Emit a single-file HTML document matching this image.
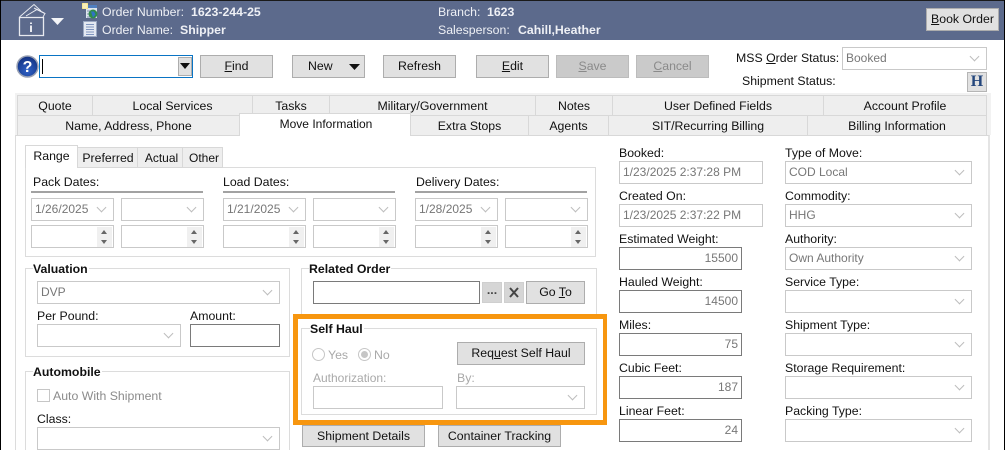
<!DOCTYPE html>
<html><head><meta charset="utf-8"><style>
html,body{margin:0;padding:0;background:#fff}
#p{position:relative;width:1005px;height:450px;overflow:hidden;background:#fff;font:12.3px/14px "Liberation Sans",sans-serif;color:#111}
#p div,#p span.t{position:absolute;box-sizing:border-box;white-space:nowrap}
.t{line-height:14px}
.w{color:#eef0f5}.b{font-weight:bold}
#p .btn{background:#e1e1e1;border:1px solid #adadad;text-align:center;line-height:20px;color:#111}
#p .dis{background:#cacaca;border-color:#bcbcbc;color:#8a8a8a}
#p .sel,#p .inp{background:#fff;border:1px solid #c9c9c9;height:23px;line-height:21px;padding-left:3px;color:#777;font-size:12px}
#p .dk{border-color:#7a7a7a;text-align:right;padding-right:3px;padding-left:0}
#p .sel:after{content:"";position:absolute;right:8px;top:5px;width:6px;height:6px;border-right:1px solid #bdbdbd;border-bottom:1px solid #bdbdbd;transform:rotate(45deg)}
#p .tab{background:#eee;border:1px solid #d8d8d8;border-left:0;text-align:center;line-height:21px;height:21px;color:#111}
#p .fs{border:1px solid #dcdcdc;background:#fff}
#p .ln{background:#a2a2a2;height:2px}
#p .sp{background:#f0f0f0;width:15px;height:10px}
#p .sp:after{content:"";position:absolute;left:4px;border-left:3.5px solid transparent;border-right:3.5px solid transparent}
#p .u:after{top:3px;border-bottom:4px solid #666}
#p .d:after{top:3px;border-top:4px solid #666}
#p .rad{width:13px;height:13px;border:1px solid #c6c6c6;border-radius:50%;background:#fff}
.lg{background:#fff;padding-right:1px}
.g{color:#a9a9a9}
#p span.l{margin-top:1px}
</style></head><body><div id="p">

<div style="left:0;top:0;width:1005px;height:40px;background:#5c6a8c;border-top:1px solid #1a1a1a"></div>
<div style="left:0;top:0;width:1px;height:450px;background:#000"></div>
<div style="left:1004px;top:0;width:1px;height:450px;background:#000"></div>

<svg style="position:absolute;left:17px;top:2px" width="32" height="36" viewBox="0 0 32 36" fill="none" stroke="#e8eaf0" stroke-width="1"><path d="M2.500 15 L17 2.500 L24 9"/><path d="M2.500 15.500H26.500V33.500H2.500Z" stroke-width="1.300"/><path d="M9 14 L20 7.500 L28 11.500 L26 15"/><path d="M17 6 L27 11"/><path d="M14 23.500v6.500M14 20.500v1.500" stroke-width="2"/></svg>
<svg style="position:absolute;left:51px;top:18px" width="13" height="8"><path d="M0 0H13L6.500 7Z" fill="#f4f5f8"/></svg>

<svg style="position:absolute;left:81px;top:2px" width="18" height="18"><rect x="5" y="3" width="11" height="13" fill="#dfe6ee"/><rect x="6" y="3" width="10" height="3" fill="#4f7fc0"/><path d="M6 9H10M6 12H10M6 15H10" stroke="#7d8db0"/><rect x="1" y="1" width="6" height="6" fill="#f3e27a"/><path d="M1 3H7M1 5H7M3 1V7M5 1V7" stroke="#fff" stroke-width=".6"/><circle cx="12" cy="12" r="4.500" fill="#2f8a4c"/><path d="M10 9.500h3l1.500 3-2.500 3z" fill="#2f72c8"/></svg>
<svg style="position:absolute;left:83px;top:21px" width="15" height="16"><rect x=".5" y=".5" width="13" height="15" fill="#e4e9f2" stroke="#9aa8c2"/><path d="M3 3.500H11M3 6H11M3 8.500H11M3 11H11M3 13.500H11" stroke="#7f95bf"/></svg>

<span class="t w" style="left:102px;top:5px">Order Number:</span><span class="t w b" style="left:191px;top:5px">1623-244-25</span>
<span class="t w" style="left:102px;top:23px">Order Name:</span><span class="t w b" style="left:180px;top:23px">Shipper</span>
<span class="t w" style="left:438px;top:5px">Branch:</span><span class="t w b" style="left:487px;top:5px">1623</span>
<span class="t w" style="left:438px;top:23px">Salesperson:</span><span class="t w b" style="left:518px;top:23px">Cahill,Heather</span>
<div class="btn" style="left:926px;top:8px;width:73px;height:23px"><u>B</u>ook Order</div>

<svg style="position:absolute;left:16px;top:55px" width="23" height="23"><defs><radialGradient id="h" cx=".5" cy=".7" r=".7"><stop offset="0" stop-color="#2f62c8"/><stop offset="1" stop-color="#12307e"/></radialGradient></defs><circle cx="11.500" cy="11.500" r="10.500" fill="url(#h)" stroke="#9aa2b4" stroke-width="1.500"/><text x="11.500" y="17" text-anchor="middle" font-family="Liberation Sans" font-weight="bold" font-size="16" fill="#fff">?</text></svg>
<div style="left:39px;top:55px;width:154px;height:23px;border:1px solid #0a74c4;background:#fff"></div>
<div style="left:42px;top:59px;width:1px;height:15px;background:#000"></div>
<div style="left:178px;top:57px;width:14px;height:19px;background:#e1e1e1;border:1px solid #adadad"></div>
<svg style="position:absolute;left:180px;top:63px" width="10" height="6"><path d="M0 0H10L5 6Z" fill="#111"/></svg>
<div class="btn" style="left:200px;top:55px;width:73px;height:23px"><u>F</u>ind</div>
<div class="btn" style="left:292px;top:55px;width:73px;height:23px;text-align:left;padding-left:15px">New</div>
<svg style="position:absolute;left:349px;top:64px" width="11" height="6"><path d="M0 0H11L5.500 6Z" fill="#111"/></svg>
<div class="btn" style="left:383px;top:55px;width:73px;height:23px">Refresh</div>
<div class="btn" style="left:476px;top:55px;width:73px;height:23px"><u>E</u>dit</div>
<div class="btn dis" style="left:556px;top:55px;width:73px;height:23px"><u>S</u>ave</div>
<div class="btn dis" style="left:636px;top:55px;width:73px;height:23px"><u>C</u>ancel</div>
<span class="t" style="left:736px;top:51px">MSS <u>O</u>rder Status:</span>
<div class="sel" style="left:842px;top:47px;width:145px">Booked</div>
<span class="t" style="left:742px;top:74px">Shipment Status:</span>
<div style="left:967px;top:72px;width:20px;height:20px;background:#e1e1e1;border:1px solid #b5b5b5;text-align:center;font:bold 16px/18px 'Liberation Serif',serif;color:#24467c">H</div>

<div style="left:15px;top:93px;width:976px;height:42px;background:#f2f2f2"></div>
<div style="left:15px;top:135px;width:975px;height:320px;background:#fff;border-left:1px solid #dcdcdc;border-right:2px solid #e4e4e4;border-top:1px solid #d8d8d8"></div>

<div class="tab" style="left:17px;top:95px;width:76px;border-left:1px solid #d8d8d8">Quote</div>
<div class="tab" style="left:93px;top:95px;width:160px">Local Services</div>
<div class="tab" style="left:253px;top:95px;width:77px">Tasks</div>
<div class="tab" style="left:330px;top:95px;width:206px">Military/Government</div>
<div class="tab" style="left:536px;top:95px;width:77px">Notes</div>
<div class="tab" style="left:613px;top:95px;width:211px">User Defined Fields</div>
<div class="tab" style="left:824px;top:95px;width:163px">Account Profile</div>
<div class="tab" style="left:17px;top:115px;width:223px;border-left:1px solid #d8d8d8">Name, Address, Phone</div>
<div class="tab" style="left:411px;top:115px;width:118px">Extra Stops</div>
<div class="tab" style="left:529px;top:115px;width:80px">Agents</div>
<div class="tab" style="left:609px;top:115px;width:199px">SIT/Recurring Billing</div>
<div class="tab" style="left:808px;top:115px;width:179px">Billing Information</div>
<div class="tab" style="left:239px;top:113px;width:172px;height:23px;background:#fff;border-bottom:0;border-left:1px solid #d8d8d8;line-height:21px;font-size:12px;padding-left:2px">Move Information</div>

<div class="fs" style="left:25px;top:167px;width:571px;height:90px"></div>
<div class="tab" style="left:77px;top:147px;width:61px;padding-left:2px">Preferred</div>
<div class="tab" style="left:138px;top:147px;width:45px;padding-left:3px;font-size:12px">Actual</div>
<div class="tab" style="left:183px;top:147px;width:40px;padding-left:3px;font-size:12px">Other</div>
<div class="tab" style="left:25px;top:145px;width:53px;height:23px;background:#fff;border-bottom:0;border-left:1px solid #d8d8d8;line-height:20px">Range</div>

<span class="t l" style="left:33px;top:174px">Pack Dates:</span><div class="ln" style="left:31px;top:191px;width:172px"></div>
<span class="t l" style="left:223px;top:174px">Load Dates:</span><div class="ln" style="left:223px;top:191px;width:172px"></div>
<span class="t l" style="left:416px;top:174px">Delivery Dates:</span><div class="ln" style="left:415px;top:191px;width:172px"></div>

<div class="sel" style="left:31px;top:198px;width:83px">1/26/2025</div><div class="sel" style="left:121px;top:198px;width:83px"></div>
<div class="sel" style="left:223px;top:198px;width:83px">1/21/2025</div><div class="sel" style="left:313px;top:198px;width:83px"></div>
<div class="sel" style="left:415px;top:198px;width:83px">1/28/2025</div><div class="sel" style="left:505px;top:198px;width:83px"></div>

<div class="inp" style="left:31px;top:225px;width:83px"></div><div class="sp u" style="left:97px;top:227px"></div><div class="sp d" style="left:97px;top:237px"></div>
<div class="inp" style="left:121px;top:225px;width:83px"></div><div class="sp u" style="left:187px;top:227px"></div><div class="sp d" style="left:187px;top:237px"></div>
<div class="inp" style="left:223px;top:225px;width:83px"></div><div class="sp u" style="left:289px;top:227px"></div><div class="sp d" style="left:289px;top:237px"></div>
<div class="inp" style="left:313px;top:225px;width:83px"></div><div class="sp u" style="left:379px;top:227px"></div><div class="sp d" style="left:379px;top:237px"></div>
<div class="inp" style="left:415px;top:225px;width:83px"></div><div class="sp u" style="left:481px;top:227px"></div><div class="sp d" style="left:481px;top:237px"></div>
<div class="inp" style="left:505px;top:225px;width:83px"></div><div class="sp u" style="left:571px;top:227px"></div><div class="sp d" style="left:571px;top:237px"></div>

<div class="fs" style="left:25px;top:268px;width:265px;height:89px"></div>
<span class="t b lg" style="left:33px;top:262px">Valuation</span>
<div class="sel" style="left:37px;top:281px;width:243px">DVP</div>
<span class="t l" style="left:37px;top:308px">Per Pound:</span>
<span class="t l" style="left:190px;top:308px">Amount:</span>
<div class="sel" style="left:37px;top:324px;width:144px"></div>
<div class="inp dk" style="left:190px;top:324px;width:90px"></div>

<div class="fs" style="left:25px;top:371px;width:265px;height:90px"></div>
<span class="t b lg" style="left:33px;top:365px">Automobile</span>
<div style="left:37px;top:389px;width:13px;height:13px;border:1px solid #c6c6c6;background:#fff"></div>
<span class="t" style="left:53px;top:389px;color:#8b8b8b">Auto With Shipment</span>
<span class="t l" style="left:37px;top:411px">Class:</span>
<div class="sel" style="left:37px;top:427px;width:243px"></div>

<div class="fs" style="left:301px;top:268px;width:296px;height:60px"></div>
<span class="t b lg" style="left:309px;top:262px">Related Order</span>
<div class="inp" style="left:313px;top:281px;width:167px;border-color:#7a7a7a"></div>
<div class="btn" style="left:482px;top:282px;width:20px;height:21px;background:#d6d6d6;border-color:#cfcfcf;line-height:15px;font-weight:bold;color:#444">...</div>
<div class="btn" style="left:504px;top:282px;width:20px;height:21px;background:#d6d6d6;border-color:#cfcfcf"></div>
<svg style="position:absolute;left:509px;top:287px" width="10" height="11"><path d="M1 1L9 10M9 1L1 10" stroke="#444" stroke-width="2"/></svg>
<div class="btn" style="left:526px;top:281px;width:59px;height:23px">Go <u>T</u>o</div>

<div style="left:293px;top:314px;width:314px;height:111px;background:#fff;border:5px solid #f7960f;border-right-width:4px"></div>
<div class="fs" style="left:301px;top:328px;width:296px;height:87px"></div>
<span class="t b lg" style="left:310px;top:322px">Self Haul</span>
<div class="rad" style="left:312px;top:348px"></div><span class="t g" style="left:328px;top:348px">Yes</span>
<div class="rad" style="left:358px;top:348px"></div><div style="left:361px;top:351px;width:7px;height:7px;border-radius:50%;background:#c6c6c6"></div><span class="t g" style="left:374px;top:348px">No</span>
<div class="btn" style="left:457px;top:342px;width:128px;height:23px">Re<span>q</span><u>u</u>est Self Haul</div>
<span class="t g" style="left:313px;top:371px;font-size:12px">Authorization:</span>
<span class="t g" style="left:457px;top:371px">By:</span>
<div class="inp" style="left:313px;top:386px;width:130px"></div>
<div class="sel" style="left:456px;top:386px;width:129px"></div>

<div class="btn" style="left:302px;top:425px;width:123px;height:22px">Shipment Details</div>
<div class="btn" style="left:438px;top:425px;width:123px;height:22px">Container Tracking</div>

<span class="t l" style="left:619px;top:145px">Booked:</span><div class="inp" style="left:619px;top:161px;width:144px">1/23/2025 2:37:28 PM</div>
<span class="t l" style="left:619px;top:188px">Created On:</span><div class="inp" style="left:619px;top:204px;width:144px">1/23/2025 2:37:22 PM</div>
<span class="t l" style="left:619px;top:231px">Estimated Weight:</span><div class="inp dk" style="left:619px;top:247px;width:123px">15500</div>
<span class="t l" style="left:619px;top:274px">Hauled Weight:</span><div class="inp dk" style="left:619px;top:290px;width:123px">14500</div>
<span class="t l" style="left:619px;top:317px">Miles:</span><div class="inp dk" style="left:619px;top:333px;width:123px">75</div>
<span class="t l" style="left:619px;top:360px">Cubic Feet:</span><div class="inp dk" style="left:619px;top:376px;width:123px">187</div>
<span class="t l" style="left:619px;top:403px">Linear Feet:</span><div class="inp dk" style="left:619px;top:419px;width:123px">24</div>

<span class="t l" style="left:785px;top:145px">Type of Move:</span><div class="sel" style="left:785px;top:161px;width:187px">COD Local</div>
<span class="t l" style="left:785px;top:188px">Commodity:</span><div class="sel" style="left:785px;top:204px;width:187px">HHG</div>
<span class="t l" style="left:785px;top:231px">Authority:</span><div class="sel" style="left:785px;top:247px;width:187px">Own Authority</div>
<span class="t l" style="left:785px;top:274px">Service Type:</span><div class="sel" style="left:785px;top:290px;width:187px"></div>
<span class="t l" style="left:785px;top:317px">Shipment Type:</span><div class="sel" style="left:785px;top:333px;width:187px"></div>
<span class="t l" style="left:785px;top:360px">Storage Requirement:</span><div class="sel" style="left:785px;top:376px;width:187px"></div>
<span class="t l" style="left:785px;top:403px">Packing Type:</span><div class="sel" style="left:785px;top:419px;width:187px"></div>

</div></body></html>
